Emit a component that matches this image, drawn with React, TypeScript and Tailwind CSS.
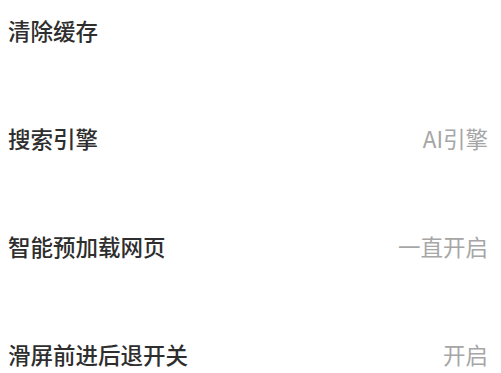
import React from "react";

const rows = [
  { label: "清除缓存", value: "" },
  { label: "搜索引擎", value: "AI引擎" },
  { label: "智能预加载网页", value: "一直开启" },
  { label: "滑屏前进后退开关", value: "开启" },
];

export default function App() {
  return (
    <div
      className="w-[501px] h-[373px] bg-white overflow-hidden flex flex-col gap-[78px] pt-[15px] pl-[8px] pr-[13px]"
      style={{ fontFamily: '"Noto Sans CJK SC", "Noto Sans", sans-serif' }}
    >
      {rows.map((row) => (
        <div key={row.label} className="h-[30px] flex items-center justify-between">
          <span className="text-[22.5px] leading-[30px] font-medium text-[#2e2e2e]">{row.label}</span>
          {row.value && (
            <span className="text-[22.5px] leading-[30px] text-[#a6a6a6]">{row.value}</span>
          )}
        </div>
      ))}
    </div>
  );
}
